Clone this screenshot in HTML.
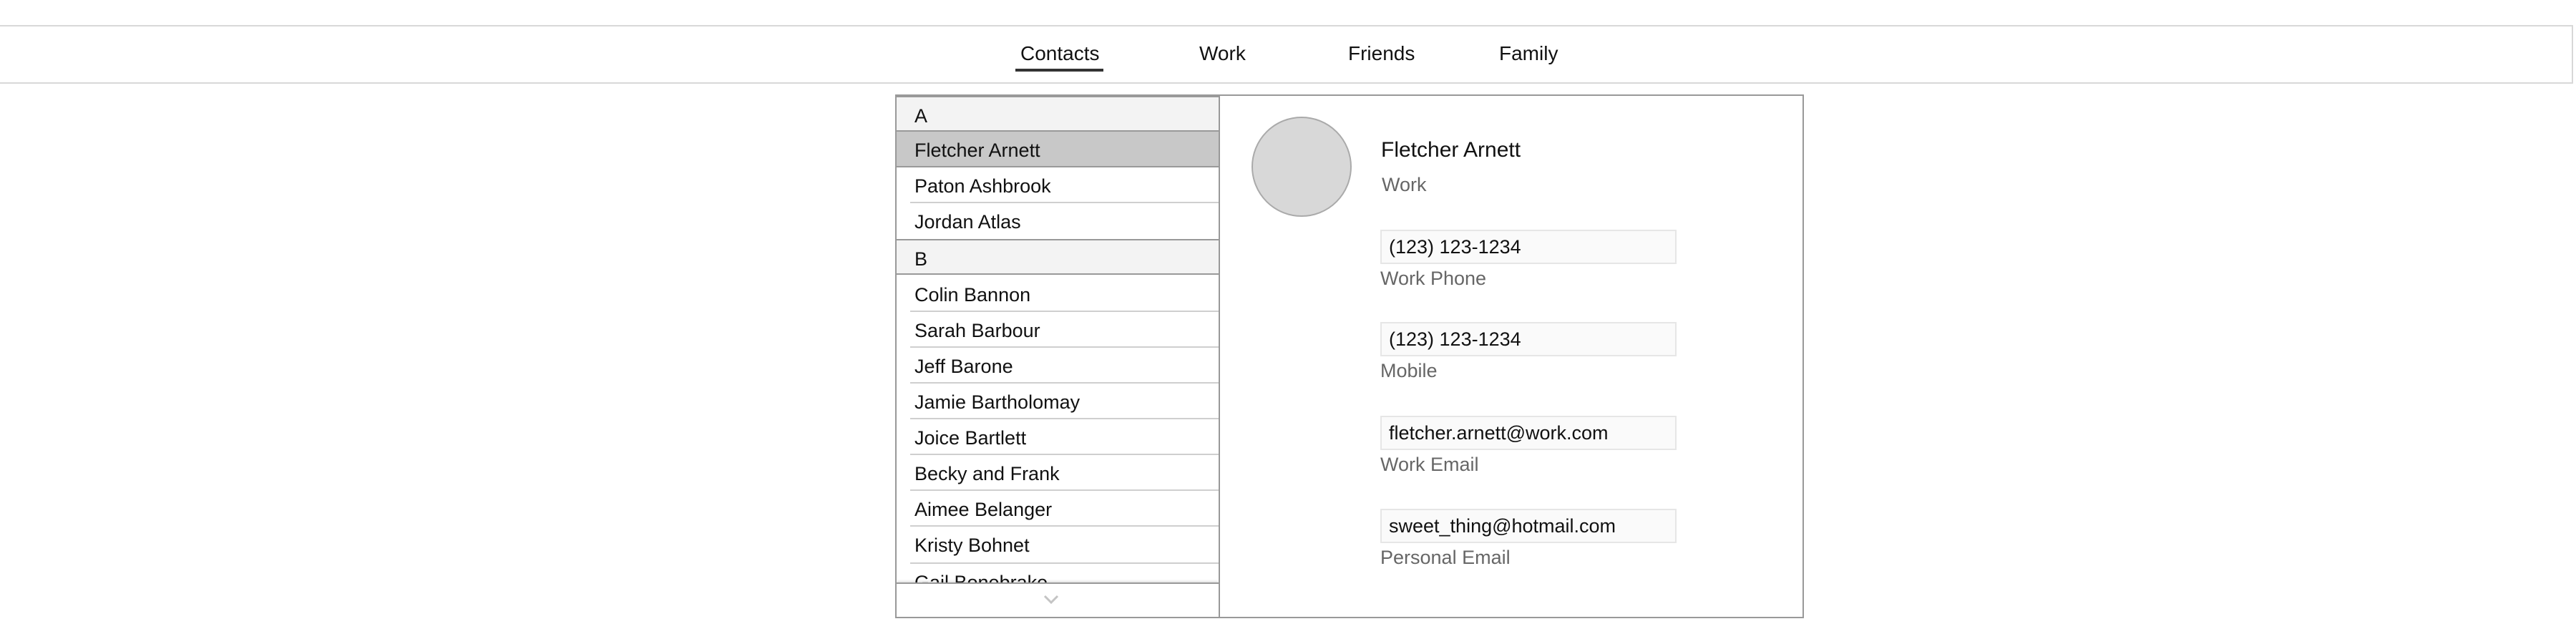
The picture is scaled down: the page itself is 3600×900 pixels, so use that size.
<!DOCTYPE html>
<html><head><meta charset="utf-8"><style>
*{margin:0;padding:0;box-sizing:border-box}
body{width:3600px;height:900px;background:#fff;font-family:"Liberation Sans",sans-serif;position:relative;overflow:hidden;color:#111}
.a{position:absolute;white-space:nowrap}
.nav{position:absolute;left:-2px;top:35px;width:3598px;height:82px;border:2px solid #d8d8d8;border-left:none}
.tab{position:absolute;top:57px;font-size:28px;line-height:36px}
.list{position:absolute;left:1251px;top:132px;width:454px;height:732px;border:2px solid #999;overflow:hidden;background:#fff}
.row{position:absolute;left:0;width:450px;height:50px;font-size:27px;line-height:50px;padding-left:25px;padding-top:3px}
.sep{position:absolute;left:19px;right:0;height:2px;background:#cfcfcf}
.hdr{background:#f3f3f3;border-top:2px solid #999;border-bottom:2px solid #999;line-height:46px}
.detail{position:absolute;left:1703px;top:132px;width:818px;height:732px;border:2px solid #999;border-left:none}
.field{position:absolute;left:1929px;width:414px;height:48px;background:#fafafa;border:2px solid #e6e6e6;font-size:27px;line-height:44px;padding-left:10px}
.lbl{position:absolute;left:1929px;font-size:27px;color:#666}
</style></head><body>
<div class="nav"></div>
<div class="tab a" style="left:1426px">Contacts</div>
<div class="a" style="left:1419px;top:96px;width:123px;height:4px;background:#333"></div>
<div class="tab a" style="left:1676px">Work</div>
<div class="tab a" style="left:1884px">Friends</div>
<div class="tab a" style="left:2095px">Family</div>

<div class="detail"></div>
<div class="list">
<div class="row hdr" style="top:0">A</div>
<div class="row" style="top:50px;background:#c8c8c8;border-bottom:2px solid #999;line-height:46px">Fletcher Arnett</div>
<div class="row" style="top:98px">Paton Ashbrook</div>
<div class="sep" style="top:148px"></div>
<div class="row" style="top:148px">Jordan Atlas</div>
<div class="row hdr" style="top:200px">B</div>
<div class="row" style="top:250px">Colin Bannon</div>
<div class="sep" style="top:300px"></div>
<div class="row" style="top:300px">Sarah Barbour</div>
<div class="sep" style="top:350px"></div>
<div class="row" style="top:350px">Jeff Barone</div>
<div class="sep" style="top:400px"></div>
<div class="row" style="top:400px">Jamie Bartholomay</div>
<div class="sep" style="top:450px"></div>
<div class="row" style="top:450px">Joice Bartlett</div>
<div class="sep" style="top:500px"></div>
<div class="row" style="top:500px">Becky and Frank</div>
<div class="sep" style="top:550px"></div>
<div class="row" style="top:550px">Aimee Belanger</div>
<div class="sep" style="top:600px"></div>
<div class="row" style="top:600px">Kristy Bohnet</div>
<div class="sep" style="top:652px"></div>
<div class="row" style="top:652px">Gail Bonebrake</div>
<div style="position:absolute;left:0;top:680px;width:450px;height:50px;background:#fff;border-top:2px solid #999;box-shadow:0 -2px 3px rgba(0,0,0,.12)">
<svg style="position:absolute;left:204px;top:14px" width="24" height="16" viewBox="0 0 24 16"><path d="M3 3 L12 12 L21 3" fill="none" stroke="#c4c4c4" stroke-width="3"/></svg>
</div>
</div>

<div class="a" style="left:1749px;top:163px;width:140px;height:140px;border-radius:50%;background:#d8d8d8;border:2px solid #aaa"></div>
<div class="a" style="left:1930px;top:192px;font-size:30px;line-height:36px">Fletcher Arnett</div>
<div class="a" style="left:1931px;top:243px;font-size:27px;color:#666">Work</div>

<div class="field" style="top:321px">(123) 123-1234</div>
<div class="lbl" style="top:374px">Work Phone</div>
<div class="field" style="top:450px">(123) 123-1234</div>
<div class="lbl" style="top:503px">Mobile</div>
<div class="field" style="top:581px">fletcher.arnett@work.com</div>
<div class="lbl" style="top:634px">Work Email</div>
<div class="field" style="top:711px">sweet_thing@hotmail.com</div>
<div class="lbl" style="top:764px">Personal Email</div>
</body></html>
